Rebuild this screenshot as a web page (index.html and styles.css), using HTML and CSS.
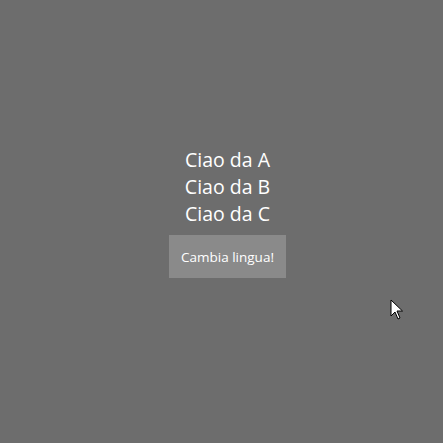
FILE: index.html
```html
<!DOCTYPE html>
<html>
<head>
<meta charset="utf-8">
<link rel="stylesheet" href="styles.css">
</head>
<body>
<main class="app">
  <div class="greetings">
    <div class="line">Ciao da A</div>
    <div class="line">Ciao da B</div>
    <div class="line">Ciao da C</div>
  </div>
  <button class="btn">Cambia lingua!</button>
</main>
<svg class="cursor" width="14" height="22" viewBox="0 0 14 22">
  <path d="M1 1 L1 17 L5 13 L8 20 L10 19 L7 12 L12.5 12 Z" fill="#fff" stroke="#000" stroke-width="1" stroke-linejoin="round"/>
</svg>
</body>
</html>
```
FILE: styles.css
```css
html, body {
  margin: 0;
  padding: 0;
  width: 443px;
  height: 443px;
  background: #6d6d6d;
  overflow: hidden;
}
body {
  position: relative;
  font-family: "Open Sans", "Noto Sans", sans-serif;
}
.app {
  display: flex;
  flex-direction: column;
  align-items: center;
  padding-top: 146px;
  padding-left: 12px;
}
.greetings {
  display: flex;
  flex-direction: column;
  align-items: center;
}
.line {
  color: #ffffff;
  font-size: 19.5px;
  line-height: 27px;
}
.btn {
  margin-top: 8px;
  width: 117px;
  height: 43px;
  background: #8a8a8a;
  border: none;
  color: #ffffff;
  font-family: "Open Sans", "Noto Sans", sans-serif;
  font-size: 13.5px;
  padding: 0;
}
.cursor {
  position: absolute;
  left: 390px;
  top: 299px;
}
```
